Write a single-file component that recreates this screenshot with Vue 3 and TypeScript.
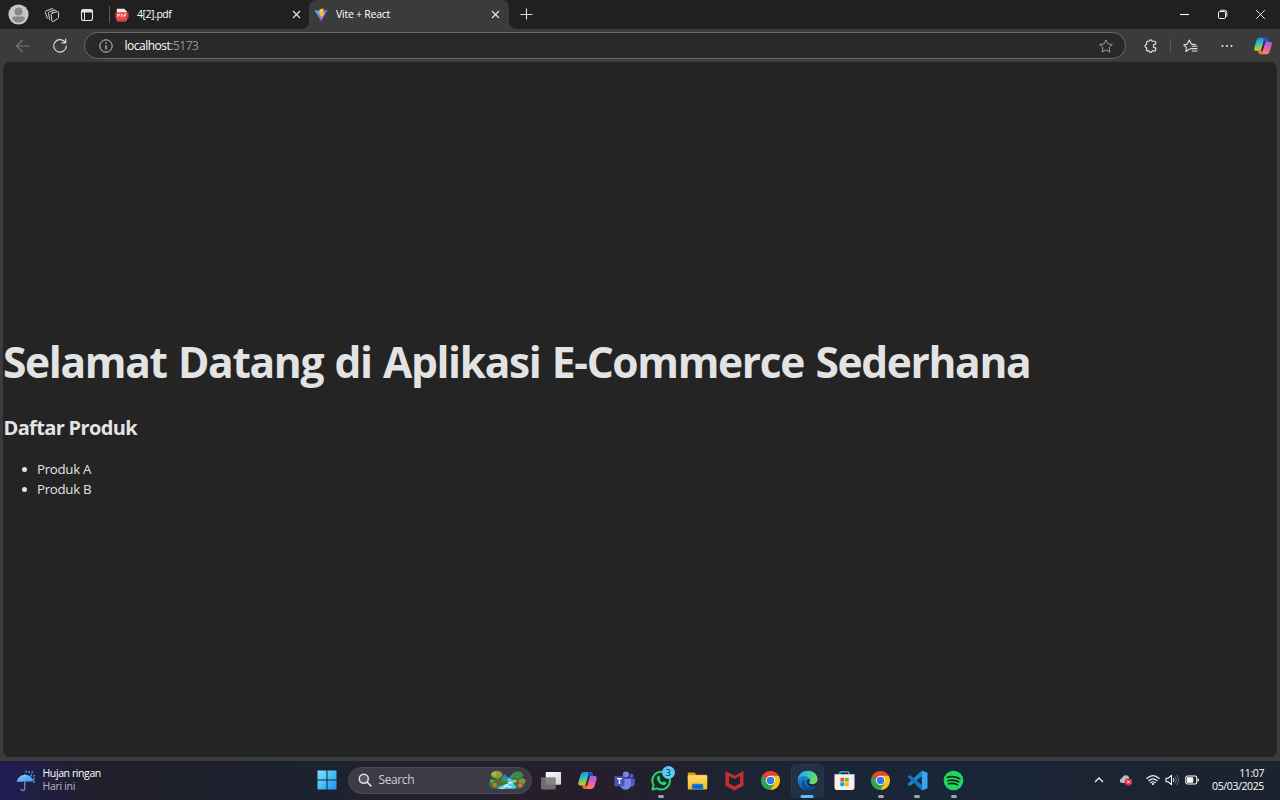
<script setup lang="ts">
interface TaskApp {
  icon: string
  label: string
  state?: 'running' | 'active'
  badge?: number
}

const taskApps: TaskApp[] = [
  { icon: 'taskview', label: 'Task view' },
  { icon: 'copilot', label: 'Copilot' },
  { icon: 'teams', label: 'Teams' },
  { icon: 'whatsapp', label: 'WhatsApp', state: 'running', badge: 3 },
  { icon: 'folder', label: 'File Explorer' },
  { icon: 'mcafee', label: 'McAfee' },
  { icon: 'chrome', label: 'Chrome' },
  { icon: 'edge', label: 'Edge', state: 'active' },
  { icon: 'store', label: 'Store' },
  { icon: 'chrome', label: 'Chrome', state: 'running' },
  { icon: 'vscode', label: 'VS Code', state: 'running' },
  { icon: 'spotify', label: 'Spotify', state: 'running' },
]

const products: string[] = ['Produk A', 'Produk B']
</script>

<template>
  <div class="screen">
    <svg class="sprites" aria-hidden="true">
      <defs>
        <linearGradient id="cpA" x1="0" y1="0" x2="0.3" y2="1">
          <stop offset="0" stop-color="#1b7fe0" /><stop offset=".4" stop-color="#22b8d6" />
          <stop offset=".7" stop-color="#7fc95a" /><stop offset="1" stop-color="#f2c21c" />
        </linearGradient>
        <linearGradient id="cpB" x1="0.6" y1="0" x2="0.3" y2="1">
          <stop offset="0" stop-color="#a55cf0" /><stop offset=".5" stop-color="#ee5fa0" /><stop offset="1" stop-color="#ff8a4c" />
        </linearGradient>
        <linearGradient id="edA" x1="0" y1="0" x2="1" y2=".3">
          <stop offset="0" stop-color="#249fe0" /><stop offset=".5" stop-color="#35c1c8" /><stop offset="1" stop-color="#70df55" />
        </linearGradient>
        <linearGradient id="edB" x1="0" y1="0" x2="0" y2="1">
          <stop offset="0" stop-color="#1f95de" /><stop offset="1" stop-color="#0f5fb8" />
        </linearGradient>
        <linearGradient id="winG" x1="0" y1="0" x2="1" y2="1">
          <stop offset="0" stop-color="#7be6fb" /><stop offset="1" stop-color="#1597f2" />
        </linearGradient>
        <linearGradient id="viteG" x1="0" y1="0" x2=".7" y2="1">
          <stop offset="0" stop-color="#41c5fb" /><stop offset="1" stop-color="#b634f5" />
        </linearGradient>
        <linearGradient id="foldG" x1="0" y1="0" x2="0" y2="1">
          <stop offset="0" stop-color="#ffdc63" /><stop offset="1" stop-color="#f7b928" />
        </linearGradient>
        <linearGradient id="umbG" x1="0" y1="0" x2="1" y2="1">
          <stop offset="0" stop-color="#8bd0ff" /><stop offset="1" stop-color="#368ee4" />
        </linearGradient>
        <linearGradient id="tvG" x1="0" y1="0" x2="1" y2="1">
          <stop offset="0" stop-color="#fff" /><stop offset="1" stop-color="#d0d0d0" />
        </linearGradient>
      </defs>
      <symbol id="taskview" viewBox="0 0 22 22">
        <rect x="5" y="2" width="16" height="13.500" rx="1" fill="url(#tvG)" />
        <rect x="0" y="7.500" width="15.500" height="13" rx="1" fill="#777" fill-opacity=".88" />
      </symbol>
      <symbol id="copilot" viewBox="0 0 22 22">
        <path d="M7 2h7q1.600 0 2 1.800l.7 2.400h-2.400q-1.600 0-2.100 1.800l-2 6.500Q9.600 16.300 8 16.300H3.500Q.8 16.300 1.400 13.200L3.700 5Q4.700 2 7 2Z" fill="url(#cpA)" />
        <path d="M11.500 2H14q1.600 0 2 1.800l.7 2.400h-2.400q-1.600 0-2.100 1.800l-.8 2.400Z" fill="#1c55c9" />
        <path d="M15 20H8.200q-1.700 0-2.200-1.800l-.6-2H8q1.600 0 2.100-1.700l2.100-6.600q.5-1.700 2.100-1.700h4.300q2.700 0 2.100 3L18.300 17q-1 3-3.300 3Z" fill="url(#cpB)" />
        <path d="M10.500 20H8.200q-1.700 0-2.200-1.800l-.6-2H8q1.600 0 2.100-1.700l.8-2.400Z" fill="#ed6b35" />
        <path d="m12.600 6.500-2.800 9.200" stroke="#26304a" stroke-width="2.200" stroke-linecap="round" />
      </symbol>
      <symbol id="teams" viewBox="0 0 22 22">
        <circle cx="18.200" cy="6.200" r="2.200" fill="#5059c9" />
        <circle cx="12.500" cy="4.700" r="3.200" fill="#7b83eb" />
        <path d="M15.500 9H21q.8 0 .8.800V14q0 3.500-3.500 3.700L15.500 16Z" fill="#5059c9" />
        <path d="M6.500 9H17q.8 0 .8.800V15q-.3 5.500-5.600 5.800Q7 20.500 6.500 15Z" fill="#7b83eb" />
        <rect x=".5" y="6.500" width="10.500" height="10.500" rx="1" fill="#4b53bc" />
        <path d="M3.200 9h5.100M5.750 9v5.600" stroke="#fff" stroke-width="1.500" fill="none" />
      </symbol>
      <symbol id="whatsapp" viewBox="0 0 22 22">
        <path d="M1.500 20.500 2.700 15.800A9.200 9.200 0 1 1 6.200 19.200Z" fill="#102c2b" stroke="#2fd46b" stroke-width="2" stroke-linejoin="round" />
        <path d="M7.200 6.300q.7-.7 1.500.1l1.200 2.400-.9 1.300q1.200 2.300 3.200 3l1.300-1.200 2.400 1.100q.8.600 0 1.600-1.500 1.700-4 1Q7.500 13.500 6.300 9.300q-.2-1.800.9-3Z" fill="#2fd46b" />
      </symbol>
      <symbol id="folder" viewBox="0 0 22 22">
        <path d="M.8 4Q.8 2.500 2.200 2.500h5.500l2.200 2.400H20q1.200 0 1.200 1.200V10H.8Z" fill="#dc981b" />
        <rect x=".8" y="5.500" width="20.400" height="15" rx="1.300" fill="url(#foldG)" />
        <path d="M5 20.500v-4.300q0-1.700 1.700-1.700h8.600q1.700 0 1.700 1.700v4.300Z" fill="#1b78d0" />
        <path d="M7.500 17.300h7" stroke="#0a4e96" stroke-width="1.200" />
      </symbol>
      <symbol id="mcafee" viewBox="0 0 22 22">
        <path d="M1.500 1 11 6l9.500-5v15.500L11 21.500l-9.500-5ZM5.300 6.300v7.900l5.700 3 5.700-3V6.300L11 9.500Z" fill="#c12f34" fill-rule="evenodd" />
      </symbol>
      <symbol id="chrome" viewBox="0 0 22 22">
        <path d="M11 11 2.340 6A10 10 0 0 1 19.660 6Z" fill="#e64335" />
        <path d="M11 11V6h8.660A10 10 0 0 1 11 21Z" fill="#fbc116" />
        <path d="M11 11 2.340 6A10 10 0 0 0 11 21l4.330-7.500Z" fill="#31a350" />
        <path d="M2.340 6 6.670 13.500 11 11V6Z" fill="#e64335" />
        <path d="m2.340 6 4.330 7.500L9 11Z" fill="#31a350" />
        <circle cx="11" cy="11" r="5" fill="#fff" /><circle cx="11" cy="11" r="4" fill="#3479e8" />
      </symbol>
      <symbol id="edge" viewBox="0 0 22 22">
        <circle cx="11" cy="11" r="10.300" fill="url(#edB)" />
        <path d="M.8 10.300C1.500 4.200 6 .7 11.500.7c6 0 10 4.300 10 8.700 0 3.500-2.600 5.600-5.600 5.600-2.300 0-3.500-.9-3.300-1.800.5-1 .9-1.700.7-2.900C12.700 7.600 10 6.100 7.200 6.200 4.200 6.300 2 7.900.8 10.300Z" fill="url(#edA)" />
        <path d="M8.500 9.500C6.300 12.800 8.500 17.500 13 18.200c2.500.4 5-.3 7-1.800-1.800 3-5 5-8.700 4.900C6.500 20.800 4.200 16.800 5.300 13 5.900 11.300 7 10 8.500 9.500Z" fill="#114a91" />
        <path d="M12.900 9.100c.8 1.400.5 2.800-.1 3.800-.6.900.5 2.100 3.100 2.100 1.900 0 3.500-.8 4.500-2l1.400 1.800-1.600 2c-3.900 1.800-9 .7-10-3.500-.3-1.800.7-3.800 2.700-4.200Z" fill="#1b2b3b" />
      </symbol>
      <symbol id="store" viewBox="0 0 22 22">
        <path d="M6.200 5V3.200q0-1.200 1.200-1.200h7.200q1.200 0 1.200 1.200V5" fill="none" stroke="#42bfe9" stroke-width="1.300" />
        <path d="M.5 4.500h21v14q0 2.500-2.500 2.500H3Q.5 21 .5 18.500Z" fill="#f1f1f1" />
        <path d="M6.700 8.200h4v4h-4Z" fill="#f25022" /><path d="M11.400 8.200h4v4h-4Z" fill="#7fba00" />
        <path d="M6.700 12.900h4v4h-4Z" fill="#00a4ef" /><path d="M11.400 12.900h4v4h-4Z" fill="#ffb900" />
      </symbol>
      <symbol id="vscode" viewBox="0 0 22 22">
        <path d="M15.500.5 21.500 3v16l-6 2.500Z" fill="#35a8ed" />
        <path d="M15.500.5v6L3 16.800.5 14.900Z" fill="#168bd2" />
        <path d="M15.500 21.500v-6L3 5.200.5 7.100Z" fill="#1477bd" />
      </symbol>
      <symbol id="spotify" viewBox="0 0 22 22">
        <circle cx="11" cy="11" r="10.300" fill="#1ed760" />
        <path d="M4.600 7.700q6.500-1.900 13 1.400M5.200 11.200q5.700-1.500 11.200 1.200M5.900 14.400q4.800-1.200 9.200 1" fill="none" stroke="#14251c" stroke-width="1.700" stroke-linecap="round" />
      </symbol>
    </svg>

    <header class="tabstrip">
      <div class="left-tools">
        <svg class="avatar" viewBox="0 0 20 20"><circle cx="10" cy="10" r="9.600" fill="#c9c7c5" /><circle cx="10" cy="7.200" r="3.800" fill="#8a8886" /><path d="M4 13.500q0-1.700 1.700-1.700h8.600q1.700 0 1.700 1.700-1.600 4-6 4t-6-4Z" fill="#8a8886" /></svg>
        <svg class="spaces" viewBox="0 0 16 16"><g fill="none" stroke="#d6d6d6" stroke-width="1" stroke-linejoin="round" stroke-linecap="round"><path d="m8.200 6 5-1.300q1.400-.3 1.400 1v4.500q0 1-.9 1.500l-4.200 2.600q-1.500.8-1.700-.8l-.6-6q-.1-1.200 1-1.500Z" /><path d="M5.600 12.500 4.500 6.400q-.2-1.300 1-1.700l5.300-1.500q1-.3 1.400.5M3.300 11.200 1.400 5.600q-.4-1.300.8-1.800L8 1.700q1-.3 1.400.5" /></g></svg>
        <svg class="actions" viewBox="0 0 14 14"><rect x="1.500" y="1.500" width="11" height="11" rx="2" fill="none" stroke="#e2e2e2" stroke-width="1.100" /><path d="M1.500 3.500q0-2 2-2h7q2 0 2 2v1h-11Z" fill="#e2e2e2" /><path d="M4.500 4v8.500" stroke="#e2e2e2" /></svg>
        <i class="divider"></i>
      </div>
      <div class="tab">
        <svg class="favicon pdf" viewBox="0 0 14 14"><path d="M2.500.8h6.700l2.500 2.400V12q0 1.300-1.300 1.300H2.500Q1.800 13 1.800 12V1.800Q1.800.8 2.500.8Z" fill="#f5eaea" /><rect x=".4" y="4.200" width="13.200" height="6.300" rx="1" fill="#e5383d" /><path d="M1.800 10.500h10v1.300q0 1.500-1.500 1.500h-7q-1.500 0-1.500-1.500Z" fill="#e5383d" /><path d="M2.700 9V6h1q1 0 1 .9t-1 .9h-1M6.100 6v2.700h.6q1.300-.2 1.300-1.350T6.700 6ZM9.500 9V6h2M9.500 7.400h1.600" fill="none" stroke="#fff" stroke-width=".8" /></svg>
        <span class="tab-title">4[2].pdf</span>
        <svg class="close" viewBox="0 0 9 9"><path d="m1 1 7 7m0-7-7 7" stroke="#e9e9e9" stroke-width="1.100" /></svg>
      </div>
      <div class="tab current">
        <svg class="favicon" viewBox="0 0 14 14"><path d="m.5 2 6.700 11.500L13.500 2 7.300 3.200Z" fill="url(#viteG)" /><path d="M9.600.5 5.500 1.300 5.200 6l1.500-.3-.5 2.500 1.400-.4-.7 3.500L10.500 5l-1.700.3.8-2Z" fill="#ffc928" /></svg>
        <span class="tab-title">Vite + React</span>
        <svg class="close" viewBox="0 0 9 9"><path d="m1 1 7 7m0-7-7 7" stroke="#e9e9e9" stroke-width="1.100" /></svg>
      </div>
      <svg class="plus" viewBox="0 0 12 12"><path d="M6.500.5v11M.5 6.500h12" stroke="#dedede" stroke-width="1.100" /></svg>
      <div class="window-controls">
        <svg viewBox="0 0 11 11"><path d="M1 5.500h9" stroke="#fff" stroke-width="1.100" /></svg>
        <svg viewBox="0 0 11 11"><rect x="1.500" y="2.500" width="7" height="7" rx="1.200" fill="none" stroke="#fff" /><path d="M3.300 1.200h4.300q2.200 0 2.200 2.200v4.300" fill="none" stroke="#fff" stroke-width=".9" /></svg>
        <svg viewBox="0 0 11 11"><path d="m1.200 1.200 8.600 8.600m0-8.600L1.200 9.800" stroke="#f0f0f0" stroke-width=".95" /></svg>
      </div>
    </header>

    <nav class="toolbar">
      <svg class="back" viewBox="0 0 16 16"><path d="M14.500 8h-13m6-6-6 6 6 6" fill="none" stroke="#777" stroke-width="1.100" /></svg>
      <svg class="reload" viewBox="0 0 16 16"><path d="M13.400 4.600A6.300 6.300 0 1 0 14.300 8M13.700 1.200v3.700H10" fill="none" stroke="#e1e1e1" stroke-width="1.200" stroke-linecap="round" stroke-linejoin="round" /></svg>
      <div class="address">
        <svg class="info" viewBox="0 0 14 14"><circle cx="7" cy="7" r="6.200" fill="none" stroke="#cfcfcf" stroke-width=".95" /><path d="M7 6.200v4.200" stroke="#ddd" stroke-width="1.100" /><circle cx="7" cy="4.100" r=".75" fill="#ddd" /></svg>
        <span class="url">localhost<em>:5173</em></span>
        <svg class="star" viewBox="0 0 14 14"><path d="m7 .9 1.900 4 4.400.6-3.200 3 .8 4.500L7 10.900 3.100 13l.8-4.500-3.200-3 4.400-.6Z" fill="none" stroke="#9b9b9b" stroke-linejoin="round" /></svg>
      </div>
      <svg class="puzzle" viewBox="0 0 14 14"><path d="M2.600 3.200q0-1 1-1h1.500Q5.300.8 6.600.8t1.500 1.400h2.600q1 0 1 1v1.900H11q-1.700.1-1.700 1.900T11 8.900h.7v2q0 1-1 1H8.100q-.2 1.400-1.500 1.400t-1.500-1.400H3.600q-1 0-1-1V8.500Q.9 8.400.9 7t1.700-1.500Z" fill="none" stroke="#e2e2e2" stroke-width="1.150" stroke-linejoin="round" /></svg>
      <i class="divider"></i>
      <svg class="favorites" viewBox="0 0 15 14"><path d="M8.500 9.500 6 10.300 2.900 12.500l.5-4L.8 5.800l3.500-.7L6.300 1l2 4.100 4.500.6M9 7.200h5M8.500 9.600H14M9.300 12H14" fill="none" stroke="#e2e2e2" stroke-width="1.100" stroke-linejoin="round" stroke-linecap="round" /></svg>
      <svg class="dots" viewBox="0 0 12 4"><circle cx="1.500" cy="2" r="1.050" fill="#e4e4e4" /><circle cx="6" cy="2" r="1.050" fill="#e4e4e4" /><circle cx="10.500" cy="2" r="1.050" fill="#e4e4e4" /></svg>
      <svg class="copilot"><use href="#copilot" /></svg>
    </nav>

    <main class="page">
      <h1>Selamat Datang di Aplikasi E-Commerce Sederhana</h1>
      <h2>Daftar Produk</h2>
      <ul>
        <li v-for="product in products" :key="product">{{ product }}</li>
      </ul>
    </main>

    <footer class="taskbar">
      <div class="weather">
        <svg viewBox="0 0 20 22"><path d="M.5 12.500Q2 6.300 8 5.600t9.500 6.700q-1.500-1-3 0-1.400-1-2.800 0-1.500-1-3 0-1.500-1-2.900.1-1.500-1-2.600.1-1.300-1-2.700 0Z" fill="url(#umbG)" /><path d="M8.300 4.800v1M8.300 12v7q0 1.700-1.800 1.700T4.700 19" fill="none" stroke="#8c8d99" stroke-width="1.200" /><path d="m9.400 3 .5-.9m2.400 1.400.6-1.100m2.200 1.400.6-1m-1.400 3.800.5-.8m2.200 1.200.5-.9m-.4 3.700.5-.9m-.6 4 .5-.9" stroke="#48aaf4" stroke-width="1.200" stroke-linecap="round" /></svg>
        <div><span>Hujan ringan</span><small>Hari ini</small></div>
      </div>
      <svg class="windows" viewBox="0 0 20 20"><path d="M.5.5h9v9h-9Zm10 0h9v9h-9Zm-10 10h9v9h-9Zm10 0h9v9h-9Z" fill="url(#winG)" /></svg>
      <div class="search">
        <svg class="lens" viewBox="0 0 14 14"><circle cx="5.800" cy="5.800" r="4.500" fill="#555660" stroke="#e3e3e6" stroke-width="1.500" /><path d="m9.200 9.200 3.700 3.700" stroke="#e3e3e6" stroke-width="1.600" stroke-linecap="round" /></svg>
        <span>Search</span>
        <svg class="scene" viewBox="0 0 40 22"><path d="M2 15q2-5 9-5l8 1 9-1q9 0 11 5-2 5-9 5H9q-6 0-7-5Z" fill="#377b35" /><path d="m15 9 3-4 4 4 5-5 4 7H14Z" fill="#2d8fc0" /><path d="M9 9q2 3 1 6h3q-1-4 1-7Z" fill="#81552e" /><ellipse cx="10" cy="5.500" rx="6" ry="4" fill="#8b9c38" /><ellipse cx="7.500" cy="4.800" rx="2.500" ry="1.800" fill="#aeb951" /><path d="M30 8v7h3V8Z" fill="#805330" /><ellipse cx="31.500" cy="6" rx="5.500" ry="3.800" fill="#369047" /><ellipse cx="36" cy="12" rx="3.500" ry="2.800" fill="#82943a" /><ellipse cx="18" cy="11" rx="3.500" ry="2" fill="#4a9145" /><ellipse cx="27" cy="10" rx="3" ry="1.800" fill="#2f7c3c" /><path d="M22 9q-3 2 1 4t-4 3q-9 1-8 4h17q4-2-1-5 3-3 0-4t-5-2Z" fill="#56cbea" /><path d="m21 13 4 1-8 3 8 1m-11 2 5-1" fill="none" stroke="#d1f7fc" stroke-width="1.200" /><circle cx="5" cy="12" r="2" fill="#51a657" /><circle cx="8" cy="16" r="2.200" fill="#e56841" /><circle cx="34" cy="16.500" r="2" fill="#ed6856" /><circle cx="29" cy="12" r="1.200" fill="#f3c350" /></svg>
      </div>
      <div class="apps">
        <div v-for="(app, index) in taskApps" :key="index" class="app" :class="app.state" :title="app.label">
          <svg><use :href="'#' + app.icon" /></svg>
          <b v-if="app.badge">{{ app.badge }}</b>
        </div>
      </div>
      <div class="tray">
        <svg class="chevron" viewBox="0 0 10 6"><path d="m1 5 4-4 4 4" fill="none" stroke="#eee" stroke-width="1.300" /></svg>
        <svg class="cloud" viewBox="0 0 14 12"><path d="M3.500 9Q.8 9 .8 6.800T3 4.300Q4 1 7 1.300T10.500 5q2 .2 2 2t-2 2Z" fill="#b8bbc0" /><circle cx="9.500" cy="8" r="3.700" fill="#d9293a" /><path d="m8 6.500 3 3m0-3-3 3" stroke="#fff" stroke-width="1" /></svg>
        <svg class="wifi" viewBox="0 0 14 12"><g fill="none" stroke="#eef0f4" stroke-width="1.150" stroke-linecap="round"><path d="M.8 4.500q6.200-5.700 12.400 0M2.800 6.700q4.200-3.700 8.400 0M4.700 8.700q2.300-1.900 4.600 0" /></g><circle cx="7" cy="10" r="1.100" fill="#fff" /></svg>
        <svg class="sound" viewBox="0 0 14 12"><path d="M1 4.200h2.300L6.500 1.300v9.400L3.300 7.800H1Z" fill="none" stroke="#fff" stroke-width="1.100" stroke-linejoin="round" /><path d="M8.300 4q1.500 2 0 4" fill="none" stroke="#e7e7e7" /><path d="M10 2.500q3 3.500 0 7m1.600-8.500q3.700 5 0 10" fill="none" stroke="#747b85" stroke-width=".8" /></svg>
        <svg class="battery" viewBox="0 0 14 10"><rect x=".8" y="1" width="11" height="8" rx="1.800" fill="none" stroke="#fff" stroke-width="1.100" /><rect x="2" y="2.300" width="6.200" height="5.400" rx=".5" fill="#fff" /><path d="M13.200 3.800v2.400" stroke="#fff" stroke-width="1.300" /></svg>
        <div class="clock"><span>11:07</span><span class="date">05/03/2025</span></div>
      </div>
    </footer>
  </div>
</template>

<style>
body { margin: 0; background: #3b3b3b; overflow: hidden; }
</style>

<style scoped>
* { box-sizing: border-box; }
.screen { width: 1280px; height: 800px; display: flex; flex-direction: column; background: #3b3b3b; color: #fff; font-family: "Open Sans", "Noto Sans", sans-serif; overflow: hidden; }
.sprites { position: absolute; width: 0; height: 0; }
svg { display: block; flex: none; }
.tabstrip { height: 29px; flex: none; display: flex; align-items: center; background: #202020; }
.left-tools { display: flex; align-items: center; width: 110px; flex: none; padding-left: 8px; }
.avatar { width: 21px; height: 21px; }
.spaces { width: 16px; height: 16px; margin-left: 15px; }
.actions { width: 14px; height: 14px; margin-left: 20px; }
.divider { width: 1px; height: 17px; background: #5a5a5a; }
.left-tools .divider { margin-left: 15px; }
.tab { width: 199px; height: 29px; display: flex; align-items: center; padding: 0 8px 0 5px; }
.favicon { width: 14px; height: 14px; }
.tab-title { flex: 1; padding: 0 0 2px 8px; font-size: 10.500px; line-height: 14px; letter-spacing: -.45px; white-space: nowrap; }
.close { width: 9px; height: 9px; }
.current { position: relative; width: 200px; background: #3b3b3b; border-radius: 7px 7px 0 0; padding-right: 9px; }
.current .tab-title { letter-spacing: -.25px; }
.current::before, .current::after { content: ""; position: absolute; bottom: 0; width: 7px; height: 7px; }
.current::before { left: -7px; background: radial-gradient(circle at 0 0, transparent 6.500px, #3b3b3b 7px); }
.current::after { right: -7px; background: radial-gradient(circle at 100% 0, transparent 6.500px, #3b3b3b 7px); }
.plus { width: 12px; height: 12px; margin: 0 0 2px 11px; overflow: visible; }
.window-controls { display: flex; gap: 27px; margin-left: auto; padding-right: 14px; }
.window-controls svg { width: 11px; height: 11px; }
.toolbar { height: 33px; flex: none; display: flex; align-items: center; padding-left: 15px; background: #3b3b3b; }
.back { width: 16px; height: 16px; }
.reload { width: 16px; height: 16px; margin-left: 21px; }
.address { width: 1042px; height: 27px; margin-left: 15.500px; border: 1px solid #686868; border-radius: 14px; background: #292929; display: flex; align-items: center; padding: 0 12px 0 14px; }
.info { width: 14px; height: 14px; }
.url { flex: 1; margin-left: 12px; font-size: 12px; line-height: 16px; letter-spacing: -.5px; }
.url em { font-style: normal; color: #969696; }
.star { width: 14px; height: 14px; }
.puzzle { width: 14px; height: 14px; margin-left: 18px; }
.toolbar .divider { height: 13px; margin: 0 12px 0 12px; }
.favorites { width: 15px; height: 14px; }
.dots { width: 12px; height: 4px; margin-left: 23px; }
.toolbar .copilot { width: 20px; height: 20px; margin-left: 20px; }
.page { width: 1274px; height: 695px; flex: none; margin-left: 3px; padding: 276px 0 0 0; border-radius: 7px; background: #242424; color: #e3e3e3; }
h1 { margin: 0; font-size: 42.500px; line-height: 48px; letter-spacing: -1.35px; word-spacing: 1.700px; font-weight: 700; white-space: nowrap; }
h2 { margin: 29px 0 0; padding-left: .5px; font-size: 20px; line-height: 26px; letter-spacing: -.65px; font-weight: 700; }
ul { margin: 18px 0 0; padding: 0 0 0 19px; list-style: none; font-size: 13.300px; line-height: 20px; letter-spacing: -.3px; }
li { display: flex; align-items: center; gap: 10px; }
li::before { content: ""; width: 5px; height: 5px; border-radius: 50%; background: currentColor; }
.taskbar { height: 39px; flex: none; margin-top: 4px; padding-bottom: 1px; display: flex; align-items: center; background: linear-gradient(90deg, #211b57 0, #201e43 35px, #211f2b 90px, #1d202b 190px, #1d2230 320px, #251f2b 480px, #251f2c 610px, #1c2433 760px, #192638 930px, #1b2433 1100px, #1b2230 1280px); }
.weather { width: 301px; display: flex; align-items: center; padding-left: 16px; }
.weather svg { width: 21px; height: 23px; }
.weather div { display: flex; flex-direction: column; margin-left: 5.500px; padding-bottom: 1px; font-size: 10.500px; line-height: 13px; letter-spacing: -.4px; }
.weather small { font-size: 10.500px; color: #b8b8c0; letter-spacing: -.3px; }
.windows { width: 20px; height: 20px; margin-left: 15.500px; }
.search { width: 184px; height: 27px; margin-left: 11px; display: flex; align-items: center; padding: 0 5px 0 9px; border: 1px solid #4a4953; border-radius: 14px; background: #3d3c46; }
.lens { width: 14px; height: 14px; }
.search span { flex: 1; margin-left: 7px; font-size: 12px; line-height: 16px; letter-spacing: -.4px; color: #cfced3; }
.scene { width: 39px; height: 22px; }
.apps { display: grid; grid-template-columns: repeat(12, 36.600px); margin-left: 1.500px; }
.app { position: relative; display: flex; justify-content: center; align-items: center; height: 37px; }
.app svg { position: relative; width: 21px; height: 21px; }
.app::after { content: ""; position: absolute; bottom: 1px; left: 50%; transform: translateX(-50%); width: 6px; height: 2.500px; border-radius: 2px; }
.running::after { background: #a0a3aa; }
.active::after { width: 13px; background: #55c5ec; }
.active::before { content: ""; position: absolute; inset: 2px 2px 1px; border-radius: 4px; background: #223143; border: 1px solid #263547; }
.app b { position: absolute; top: 4px; left: 19px; width: 13px; height: 13px; border-radius: 50%; background: #57cdf2; color: #12303d; font-size: 9.500px; line-height: 13px; text-align: center; font-weight: 400; }
.tray { display: flex; align-items: center; margin-left: auto; padding-right: 16px; }
.chevron { width: 10px; height: 6px; margin-right: 15px; }
.cloud { width: 14px; height: 12px; margin-right: 13px; }
.wifi { width: 14px; height: 12px; margin-right: 5px; }
.sound { width: 14px; height: 12px; margin-right: 6px; }
.battery { width: 14px; height: 10px; margin-right: 13px; }
.clock { display: flex; flex-direction: column; align-items: flex-end; padding-bottom: 1px; font-size: 10.500px; line-height: 13px; letter-spacing: -.4px; }
.clock .date { letter-spacing: -.38px; }
</style>
